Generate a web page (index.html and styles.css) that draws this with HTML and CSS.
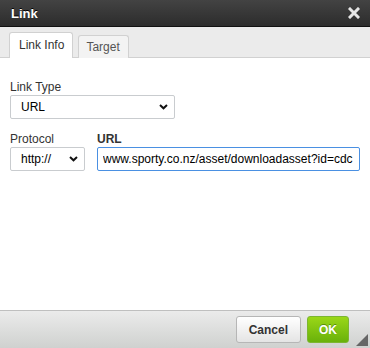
FILE: index.html
```html
<!DOCTYPE html>
<html>
<head>
    <title>Link</title>
    <link rel="stylesheet" href="styles.css">
</head>
<body>
    <div class="dialog">
        <div class="dialog-title">
            <span>Link</span>
            <svg class="close" width="12" height="12" viewBox="0 0 12 12">
                <path d="M2 2L10 10M10 2L2 10" stroke="#e6e6e6" stroke-width="3" stroke-linecap="square"/>
            </svg>
        </div>
        <div class="tabs">
            <div class="tab active">Link Info</div>
            <div class="tab">Target</div>
        </div>
        <div class="dialog-body">
            <div class="field">
                <label for="link-type">Link Type</label>
                <select id="link-type" class="type-select">
                    <option>URL</option>
                </select>
            </div>
            <div class="row">
                <div class="field">
                    <label for="protocol">Protocol</label>
                    <select id="protocol" class="protocol-select">
                        <option>http://</option>
                    </select>
                </div>
                <div class="field grow">
                    <label for="url" class="strong">URL</label>
                    <input type="text" id="url" class="url-input" value="www.sporty.co.nz/asset/downloadasset?id=cdc">
                </div>
            </div>
        </div>
        <div class="dialog-footer">
            <button class="btn">Cancel</button>
            <button class="btn btn-ok">OK</button>
            <span class="resizer"></span>
        </div>
    </div>
</body>
</html>
```

FILE: styles.css
```css
body {
    margin: 0;
    font-family: 'Liberation Sans', Arial, sans-serif;
    font-size: 12px;
    color: #333;
    background: #fff;
}
.dialog {
    width: 370px;
    height: 348px;
    display: flex;
    flex-direction: column;
    overflow: hidden;
}
.dialog-title {
    height: 27px;
    box-sizing: border-box;
    display: flex;
    align-items: center;
    justify-content: space-between;
    padding: 0 10px 0 11px;
    background: linear-gradient(#434343, #2c2c2c);
    border-bottom: 1px solid #111;
    color: #fff;
    font-weight: bold;
    font-size: 13px;
    text-shadow: 0 -1px 0 #000;
}
.close {
    display: block;
}
.tabs {
    height: 31px;
    box-sizing: border-box;
    display: flex;
    align-items: flex-end;
    gap: 5px;
    padding: 0 0 0 9px;
    background: #ebebeb;
    border-bottom: 1px solid #d1d1d1;
}
.tab {
    height: 22px;
    line-height: 22px;
    padding: 0 8px 0 7px;
    margin-bottom: -1px;
    background: #f3f3f3;
    border: 1px solid #d1d1d1;
    border-bottom: none;
    border-radius: 3px 3px 0 0;
    color: #555;
    font-size: 12px;
}
.tab.active {
    height: 25px;
    line-height: 25px;
    padding: 0 8px 0 9px;
    background: #fff;
    color: #333;
}
.dialog-body {
    flex: 1;
    padding: 22px 10px 0 10px;
    display: flex;
    flex-direction: column;
    gap: 13px;
}
.field {
    display: flex;
    flex-direction: column;
    gap: 1px;
}
.field label {
    font-size: 12px;
    line-height: 14px;
    color: #333;
}
.field label.strong {
    font-weight: bold;
}
.row {
    display: flex;
    gap: 12px;
}
.grow {
    flex: 1;
}
select, input {
    font-family: 'Liberation Sans', Arial, sans-serif;
    font-size: 12px;
    color: #000;
    box-sizing: border-box;
    height: 24px;
    border: 1px solid #c9cccf;
    border-radius: 2px;
    background: #fff;
}
select {
    appearance: none;
    padding: 0 20px 0 10px;
    background-image: url("data:image/svg+xml;utf8,<svg xmlns='http://www.w3.org/2000/svg' width='9' height='6' viewBox='0 0 9 6'><path d='M1 1l3.5 3.3 3.5-3.3' fill='none' stroke='%23111' stroke-width='2'/></svg>");
    background-repeat: no-repeat;
    background-position: right 6px center;
}
.type-select {
    width: 165px;
}
.protocol-select {
    width: 75px;
}
.url-input {
    width: 100%;
    padding: 0 5px;
    border: 1px solid #4a90e2;
    border-radius: 2px;
    outline: none;
}
.dialog-footer {
    height: 38px;
    box-sizing: border-box;
    display: flex;
    align-items: flex-start;
    justify-content: flex-end;
    gap: 6px;
    padding: 5px 21px 0 0;
    background: linear-gradient(#ebebeb, #cfd1cf);
    border-top: 1px solid #bfbfbf;
    position: relative;
}
.btn {
    height: 27px;
    padding: 0 12px;
    font-family: 'Liberation Sans', Arial, sans-serif;
    font-size: 12px;
    font-weight: bold;
    color: #333;
    background: linear-gradient(#fff, #e4e4e4);
    border: 1px solid #b6b6b6;
    border-radius: 3px;
}
.btn-ok {
    padding: 0 11px;
    color: #fff;
    background: linear-gradient(#9ad717, #69b10b);
    border-color: #7cb631;
    text-shadow: 0 -1px 0 #5a8e0e;
}
.resizer {
    position: absolute;
    right: 2px;
    bottom: 2px;
    width: 0;
    height: 0;
    border-left: 12px solid transparent;
    border-bottom: 12px solid #666;
}
```
